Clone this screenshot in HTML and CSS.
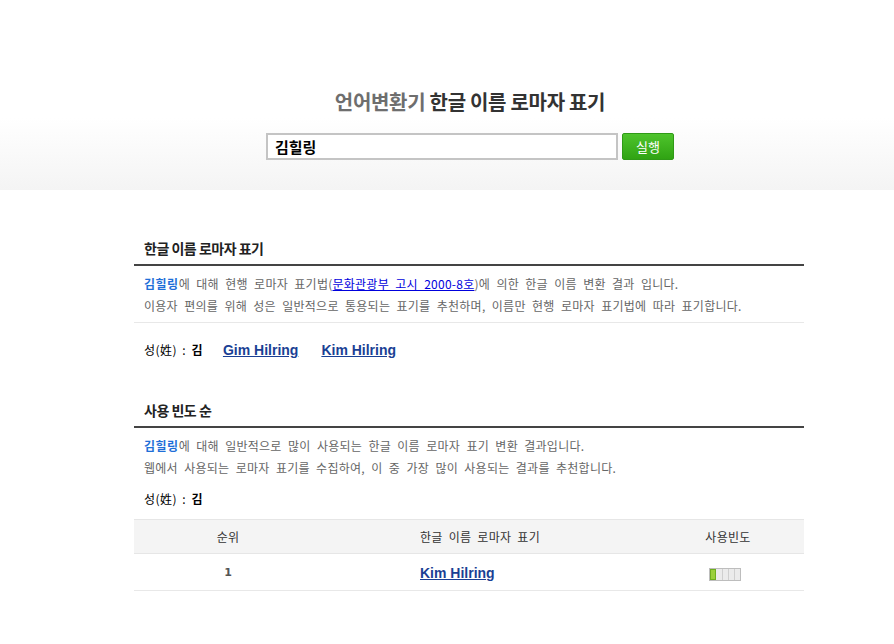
FILE: index.html
```html
<!DOCTYPE html>
<html>
	<head>
		<meta charset="UTF-8">
		<title>한글 이름 로마자 표기</title>
		<link rel="stylesheet" href="styles.css">
	</head>
	<body>
		<div class="header">
			<div class="header-in">
				<h1 class="title"><span class="brand">언어변환기</span> 한글 이름 로마자 표기</h1>
				<form class="search" onsubmit="return false">
					<input class="query" type="text" value="김힐링">
					<button class="run" type="submit">실행</button>
				</form>
			</div>
		</div>
		<div class="content">
			<div class="section">
				<h2 class="sec-title">한글 이름 로마자 표기</h2>
				<div class="desc">
					<p><b class="name">김힐링</b>에 대해 현행 로마자 표기법(<a href="#" class="law">문화관광부 고시 2000-8호</a>)에 의한 한글 이름 변환 결과 입니다.</p>
					<p>이용자 편의를 위해 성은 일반적으로 통용되는 표기를 추천하며, 이름만 현행 로마자 표기법에 따라 표기합니다.</p>
				</div>
				<div class="surname">
					<span>성(姓) : <b>김</b></span>
					<a href="#" class="roman">Gim Hilring</a>
					<a href="#" class="roman">Kim Hilring</a>
				</div>
			</div>
			<div class="section second">
				<h2 class="sec-title">사용 빈도 순</h2>
				<div class="desc plain">
					<p><b class="name">김힐링</b>에 대해 일반적으로 많이 사용되는 한글 이름 로마자 표기 변환 결과입니다.</p>
					<p>웹에서 사용되는 로마자 표기를 수집하여, 이 중 가장 많이 사용되는 결과를 추천합니다.</p>
				</div>
				<div class="surname small">
					<span>성(姓) : <b>김</b></span>
				</div>
				<table class="freq">
					<thead>
						<tr>
							<th class="c1">순위</th>
							<th class="c2">한글 이름 로마자 표기</th>
							<th class="c3">사용빈도</th>
						</tr>
					</thead>
					<tbody>
						<tr>
							<td class="c1 rank">1</td>
							<td class="c2"><a href="#" class="roman">Kim Hilring</a></td>
							<td class="c3">
								<span class="bar"><i class="on"></i><i></i><i></i><i></i><i></i></span>
							</td>
						</tr>
					</tbody>
				</table>
			</div>
		</div>
	</body>
</html>
```

FILE: styles.css
```css
* {
	margin: 0;
	padding: 0;
	box-sizing: border-box;
}

body {
	font-family: "Noto Sans CJK KR", "Noto Sans", sans-serif;
	font-size: 12px;
	color: #333;
	background: #fff;
}

.header {
	height: 190px;
	background: linear-gradient(#fff 0%, #fff 62%, #f4f4f4 100%);
	padding-top: 89px;
}

.header-in {
	padding-left: 46px;
	text-align: center;
}

.title {
	font-size: 20px;
	line-height: 26px;
	font-weight: bold;
	color: #333;
	letter-spacing: -0.3px;
}

.brand {
	color: #6e6e6e;
}

.search {
	margin-top: 18px;
	display: flex;
	justify-content: center;
	gap: 4px;
}

.query {
	width: 352px;
	height: 27px;
	border: 2px solid #c4c4c4;
	padding-left: 7px;
	font-family: "Noto Sans CJK KR", sans-serif;
	font-size: 15px;
	font-weight: bold;
	color: #000;
	outline: none;
}

.run {
	width: 52px;
	height: 27px;
	border: 1px solid #2f9a16;
	border-radius: 2px;
	background: linear-gradient(#4ec42c, #30a313);
	color: #fff;
	font-family: "Noto Sans CJK KR", sans-serif;
	font-size: 13px;
}

.content {
	width: 670px;
	margin-left: 134px;
	padding-top: 48px;
}

.sec-title {
	font-size: 14px;
	line-height: 20px;
	font-weight: bold;
	color: #222;
	padding: 0 10px 6px;
	border-bottom: 2px solid #444;
	letter-spacing: -0.5px;
}

.desc {
	padding: 7px 10px 5px;
	border-bottom: 1px solid #e8e8e8;
	color: #666;
	line-height: 22px;
	letter-spacing: 0.25px;
	word-spacing: 3.4px;
}

.desc.plain {
	border-bottom: none;
	padding-bottom: 0;
}

.name {
	color: #1f6fd8;
	letter-spacing: 0.5px;
}

.law {
	color: #0000dd;
	text-decoration: underline;
}

.surname {
	display: flex;
	align-items: center;
	gap: 20px;
	padding: 17px 10px 0;
	line-height: 20px;
	color: #000;
	letter-spacing: 0.5px;
	word-spacing: 2px;
}

.surname.small {
	padding-top: 10px;
}

.surname b {
	color: #000;
}

.surname .roman + .roman {
	margin-left: 3px;
}

.roman {
	font-family: "Liberation Sans", Arial, sans-serif;
	font-size: 14px;
	font-weight: bold;
	color: #1a3f94;
	text-decoration: underline;
	letter-spacing: 0;
	word-spacing: 0;
}

.second {
	margin-top: 40px;
}

.freq {
	width: 100%;
	margin-top: 10px;
	border-collapse: collapse;
}

.freq th {
	height: 34px;
	background: #f4f4f4;
	border-top: 1px solid #e6e6e6;
	border-bottom: 1px solid #e6e6e6;
	font-weight: normal;
	color: #333;
	letter-spacing: 0.3px;
	word-spacing: 3px;
}

.freq td {
	height: 37px;
	border-bottom: 1px solid #e8e8e8;
}

.c1 {
	width: 188px;
	text-align: center;
}

.c2 {
	text-align: left;
	padding-left: 98px;
}

.c3 {
	width: 152px;
	text-align: center;
}

.rank {
	font-weight: bold;
	color: #555;
	font-family: "DejaVu Sans", sans-serif;
	font-size: 11px;
}

.bar {
	display: inline-flex;
	vertical-align: middle;
	border: 1px solid #bdbdbd;
	margin-right: 7px;
}

.bar i {
	width: 6px;
	height: 11px;
	background: #ebebeb;
	border-left: 1px solid #cfcfcf;
}

.bar i.on {
	background: #9ad03a;
	border: 1px solid #6fae1e;
	width: 6px;
}

.bar i.on + i {
	border-left: none;
}
```
